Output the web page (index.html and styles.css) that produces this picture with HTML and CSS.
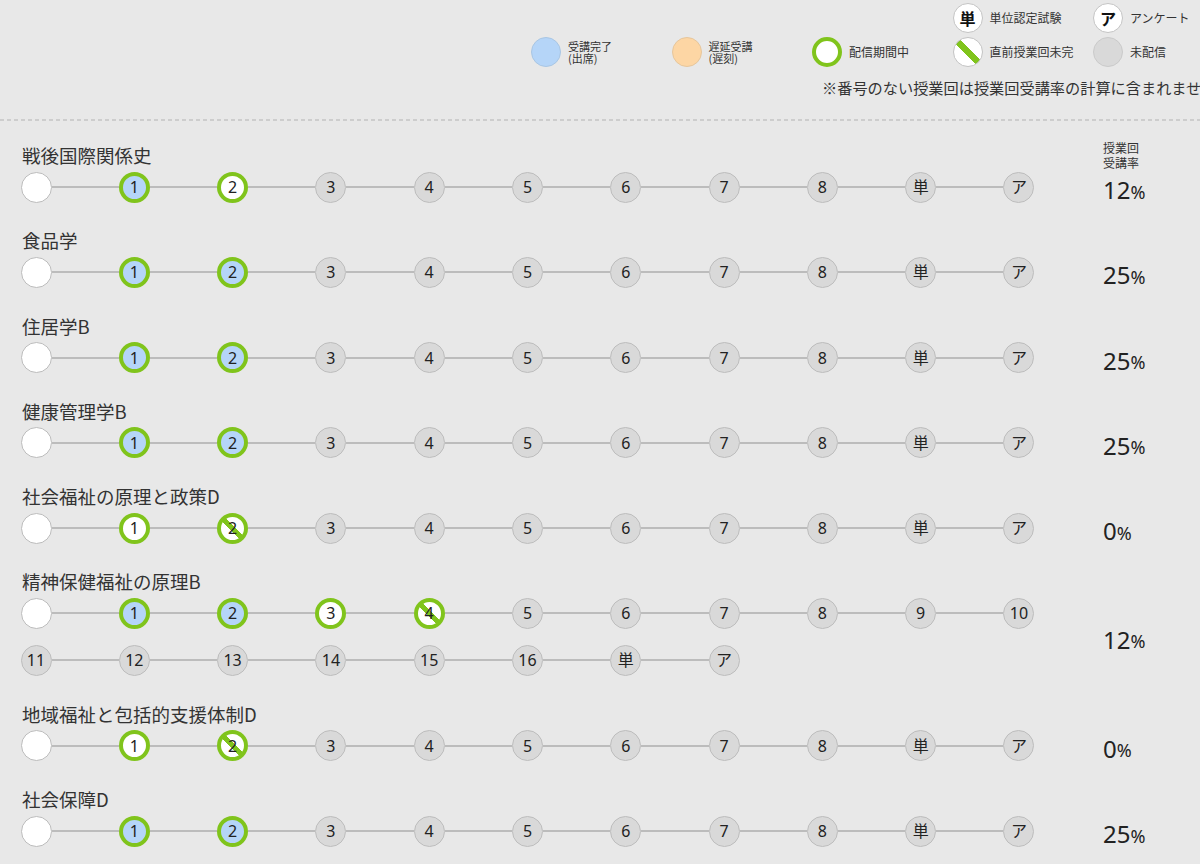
FILE: index.html
```html
<!DOCTYPE html>
<html lang="ja">
<head>
<meta charset="utf-8">
<title>授業回受講状況</title>
<link rel="stylesheet" href="styles.css">
</head>
<body>
<div class="page">
  <header class="legend">
    <div class="legend-grid">
      <div class="lg-item c4 r1"><span class="lg-dot lg-white"><b>単</b></span><span class="lg-text">単位認定試験</span></div>
      <div class="lg-item c5 r1"><span class="lg-dot lg-white"><b>ア</b></span><span class="lg-text">アンケート</span></div>
      <div class="lg-item c1 r2"><span class="lg-dot lg-blue"></span><span class="lg-text small">受講完了<br>(出席)</span></div>
      <div class="lg-item c2 r2"><span class="lg-dot lg-orange"></span><span class="lg-text small">遅延受講<br>(遅刻)</span></div>
      <div class="lg-item c3 r2"><span class="lg-dot lg-live"></span><span class="lg-text">配信期間中</span></div>
      <div class="lg-item c4 r2"><span class="lg-dot lg-slash"></span><span class="lg-text">直前授業回未完</span></div>
      <div class="lg-item c5 r2"><span class="lg-dot lg-gray"></span><span class="lg-text">未配信</span></div>
    </div>
    <p class="note">※番号のない授業回は授業回受講率の計算に含まれません。</p>
  </header>
  <div class="divider"></div>
  <main class="courses">
    <section class="course">
      <h2 class="title">戦後国際関係史</h2>
      <div class="rate-head">授業回<br>受講率</div>
      <div class="tracks">
        <div class="track">
          <span class="dot none"></span><i class="link"></i>
          <span class="dot done">1</span><i class="link"></i>
          <span class="dot live">2</span><i class="link"></i>
          <span class="dot">3</span><i class="link"></i>
          <span class="dot">4</span><i class="link"></i>
          <span class="dot">5</span><i class="link"></i>
          <span class="dot">6</span><i class="link"></i>
          <span class="dot">7</span><i class="link"></i>
          <span class="dot">8</span><i class="link"></i>
          <span class="dot">単</span><i class="link"></i>
          <span class="dot">ア</span>
        </div>
      </div>
      <div class="pct">12<small>%</small></div>
    </section>

    <section class="course">
      <h2 class="title">食品学</h2>
      <div class="tracks">
        <div class="track">
          <span class="dot none"></span><i class="link"></i>
          <span class="dot done">1</span><i class="link"></i>
          <span class="dot done">2</span><i class="link"></i>
          <span class="dot">3</span><i class="link"></i>
          <span class="dot">4</span><i class="link"></i>
          <span class="dot">5</span><i class="link"></i>
          <span class="dot">6</span><i class="link"></i>
          <span class="dot">7</span><i class="link"></i>
          <span class="dot">8</span><i class="link"></i>
          <span class="dot">単</span><i class="link"></i>
          <span class="dot">ア</span>
        </div>
      </div>
      <div class="pct">25<small>%</small></div>
    </section>

    <section class="course">
      <h2 class="title">住居学B</h2>
      <div class="tracks">
        <div class="track">
          <span class="dot none"></span><i class="link"></i>
          <span class="dot done">1</span><i class="link"></i>
          <span class="dot done">2</span><i class="link"></i>
          <span class="dot">3</span><i class="link"></i>
          <span class="dot">4</span><i class="link"></i>
          <span class="dot">5</span><i class="link"></i>
          <span class="dot">6</span><i class="link"></i>
          <span class="dot">7</span><i class="link"></i>
          <span class="dot">8</span><i class="link"></i>
          <span class="dot">単</span><i class="link"></i>
          <span class="dot">ア</span>
        </div>
      </div>
      <div class="pct">25<small>%</small></div>
    </section>

    <section class="course">
      <h2 class="title">健康管理学B</h2>
      <div class="tracks">
        <div class="track">
          <span class="dot none"></span><i class="link"></i>
          <span class="dot done">1</span><i class="link"></i>
          <span class="dot done">2</span><i class="link"></i>
          <span class="dot">3</span><i class="link"></i>
          <span class="dot">4</span><i class="link"></i>
          <span class="dot">5</span><i class="link"></i>
          <span class="dot">6</span><i class="link"></i>
          <span class="dot">7</span><i class="link"></i>
          <span class="dot">8</span><i class="link"></i>
          <span class="dot">単</span><i class="link"></i>
          <span class="dot">ア</span>
        </div>
      </div>
      <div class="pct">25<small>%</small></div>
    </section>

    <section class="course">
      <h2 class="title">社会福祉の原理と政策D</h2>
      <div class="tracks">
        <div class="track">
          <span class="dot none"></span><i class="link"></i>
          <span class="dot live">1</span><i class="link"></i>
          <span class="dot slash">2</span><i class="link"></i>
          <span class="dot">3</span><i class="link"></i>
          <span class="dot">4</span><i class="link"></i>
          <span class="dot">5</span><i class="link"></i>
          <span class="dot">6</span><i class="link"></i>
          <span class="dot">7</span><i class="link"></i>
          <span class="dot">8</span><i class="link"></i>
          <span class="dot">単</span><i class="link"></i>
          <span class="dot">ア</span>
        </div>
      </div>
      <div class="pct">0<small>%</small></div>
    </section>

    <section class="course">
      <h2 class="title">精神保健福祉の原理B</h2>
      <div class="tracks">
        <div class="track">
          <span class="dot none"></span><i class="link"></i>
          <span class="dot done">1</span><i class="link"></i>
          <span class="dot done">2</span><i class="link"></i>
          <span class="dot live">3</span><i class="link"></i>
          <span class="dot slash">4</span><i class="link"></i>
          <span class="dot">5</span><i class="link"></i>
          <span class="dot">6</span><i class="link"></i>
          <span class="dot">7</span><i class="link"></i>
          <span class="dot">8</span><i class="link"></i>
          <span class="dot">9</span><i class="link"></i>
          <span class="dot">10</span>
        </div>
        <div class="track">
          <span class="dot">11</span><i class="link"></i>
          <span class="dot">12</span><i class="link"></i>
          <span class="dot">13</span><i class="link"></i>
          <span class="dot">14</span><i class="link"></i>
          <span class="dot">15</span><i class="link"></i>
          <span class="dot">16</span><i class="link"></i>
          <span class="dot">単</span><i class="link"></i>
          <span class="dot">ア</span>
        </div>
      </div>
      <div class="pct">12<small>%</small></div>
    </section>

    <section class="course">
      <h2 class="title">地域福祉と包括的支援体制D</h2>
      <div class="tracks">
        <div class="track">
          <span class="dot none"></span><i class="link"></i>
          <span class="dot live">1</span><i class="link"></i>
          <span class="dot slash">2</span><i class="link"></i>
          <span class="dot">3</span><i class="link"></i>
          <span class="dot">4</span><i class="link"></i>
          <span class="dot">5</span><i class="link"></i>
          <span class="dot">6</span><i class="link"></i>
          <span class="dot">7</span><i class="link"></i>
          <span class="dot">8</span><i class="link"></i>
          <span class="dot">単</span><i class="link"></i>
          <span class="dot">ア</span>
        </div>
      </div>
      <div class="pct">0<small>%</small></div>
    </section>

    <section class="course">
      <h2 class="title">社会保障D</h2>
      <div class="tracks">
        <div class="track">
          <span class="dot none"></span><i class="link"></i>
          <span class="dot done">1</span><i class="link"></i>
          <span class="dot done">2</span><i class="link"></i>
          <span class="dot">3</span><i class="link"></i>
          <span class="dot">4</span><i class="link"></i>
          <span class="dot">5</span><i class="link"></i>
          <span class="dot">6</span><i class="link"></i>
          <span class="dot">7</span><i class="link"></i>
          <span class="dot">8</span><i class="link"></i>
          <span class="dot">単</span><i class="link"></i>
          <span class="dot">ア</span>
        </div>
      </div>
      <div class="pct">25<small>%</small></div>
    </section>
  </main>
</div>
</body>
</html>
```

FILE: styles.css
```css
html, body {
  margin: 0;
  padding: 0;
  overflow: hidden;
  background: #e8e8e8;
}

body {
  font-family: "Noto Sans", "Noto Sans CJK JP", sans-serif;
  color: #222;
}

.page {
  width: 1200px;
  overflow: hidden;
}

/* ---------- legend ---------- */
.legend {
  padding-top: 1px;
}

.legend-grid {
  margin-left: 531px;
  display: grid;
  grid-template-columns: repeat(5, 140.5px);
  grid-template-rows: 34px 34px;
}

.c1 { grid-column: 1; }
.c2 { grid-column: 2; }
.c3 { grid-column: 3; }
.c4 { grid-column: 4; }
.c5 { grid-column: 5; }
.r1 { grid-row: 1; }
.r2 { grid-row: 2; }

.lg-item {
  display: flex;
  align-items: center;
  gap: 7px;
}

.lg-dot {
  box-sizing: border-box;
  width: 30px;
  height: 30px;
  border-radius: 50%;
  flex: none;
  display: flex;
  align-items: center;
  justify-content: center;
  font-size: 16px;
  color: #111;
}

.lg-dot b {
  font-weight: 700;
  font-family: "Noto Sans CJK JP", sans-serif;
}

.lg-white {
  background: #fff;
  border: 1px solid #c4c4c4;
}

.lg-blue {
  background: #b5d5f8;
  border: 1px solid #a9c6e3;
}

.lg-orange {
  background: #fdd6a4;
  border: 1px solid #e6c69c;
}

.lg-live {
  background: #fff;
  border: 4px solid #80c41c;
}

.lg-slash {
  border: 1px solid #c4c4c4;
  background: linear-gradient(45deg, #fff 42%, #80c41c 42%, #80c41c 58%, #fff 58%);
}

.lg-gray {
  background: #d9d9d9;
  border: 1px solid #cacaca;
}

.lg-text {
  font-family: "Noto Sans CJK JP", sans-serif;
  font-size: 12px;
  line-height: 14px;
  color: #333;
  white-space: nowrap;
}

.lg-text.small {
  font-size: 11px;
  line-height: 12.5px;
}

.item-blue-fix { }

.note {
  margin: 8px 0 0 822px;
  font-family: "Noto Sans CJK JP", sans-serif;
  font-size: 15.2px;
  line-height: 20px;
  color: #333;
  white-space: nowrap;
}

.divider {
  margin-top: 21.5px;
  height: 2px;
  background-image: linear-gradient(to right, #cdcdcd 4px, transparent 4px);
  background-size: 7px 2px;
  background-repeat: repeat-x;
}

/* ---------- courses ---------- */
.courses {
  padding: 19.5px 0 0 20.5px;
}

.course {
  display: grid;
  grid-template-columns: 1082.5px 1fr;
  grid-template-rows: 30px auto;
  margin-bottom: 22.8px;
}

.title {
  grid-column: 1;
  grid-row: 1;
  margin: 0;
  padding-left: 1.5px;
  font-family: "Noto Sans CJK JP", sans-serif;
  font-weight: 400;
  font-size: 18.5px;
  line-height: 30px;
  height: 30px;
  color: #333;
  white-space: nowrap;
}

.rate-head {
  grid-column: 2;
  grid-row: 1;
  align-self: end;
  font-family: "Noto Sans CJK JP", sans-serif;
  font-size: 12px;
  line-height: 15px;
  color: #333;
}

.tracks {
  grid-column: 1;
  grid-row: 2;
  margin-top: 1.5px;
  display: flex;
  flex-direction: column;
  gap: 16px;
}

.track {
  display: flex;
  align-items: center;
  height: 31px;
}

.link {
  width: 67.3px;
  height: 2px;
  background: #bcbcbc;
  flex: none;
}

.dot {
  box-sizing: border-box;
  width: 31px;
  height: 31px;
  border-radius: 50%;
  flex: none;
  display: flex;
  align-items: center;
  justify-content: center;
  background: #d9d9d9;
  border: 1px solid #bdbdbd;
  font-size: 16px;
  line-height: 1;
  color: #222;
  font-family: "Noto Sans", "Noto Sans CJK JP", sans-serif;
}

.dot.none {
  background: #fff;
  border-color: #bcbcbc;
}

.dot.done {
  background: #b5d5f8;
  border: 4px solid #80c41c;
}

.dot.live {
  background: #fff;
  border: 4px solid #80c41c;
}

.dot.slash {
  border: 4px solid #80c41c;
  background: linear-gradient(45deg, #fff 42%, #80c41c 42%, #80c41c 58%, #fff 58%);
}

.pct {
  grid-column: 2;
  grid-row: 2;
  margin-top: 1.5px;
  display: flex;
  align-items: center;
  padding-top: 6px;
  font-family: "Noto Sans", sans-serif;
  font-size: 24px;
  line-height: 24px;
  color: #222;
}

.pct small {
  font-size: 18px;
  line-height: 18px;
  align-self: center;
  padding-top: 3px;
}
```
